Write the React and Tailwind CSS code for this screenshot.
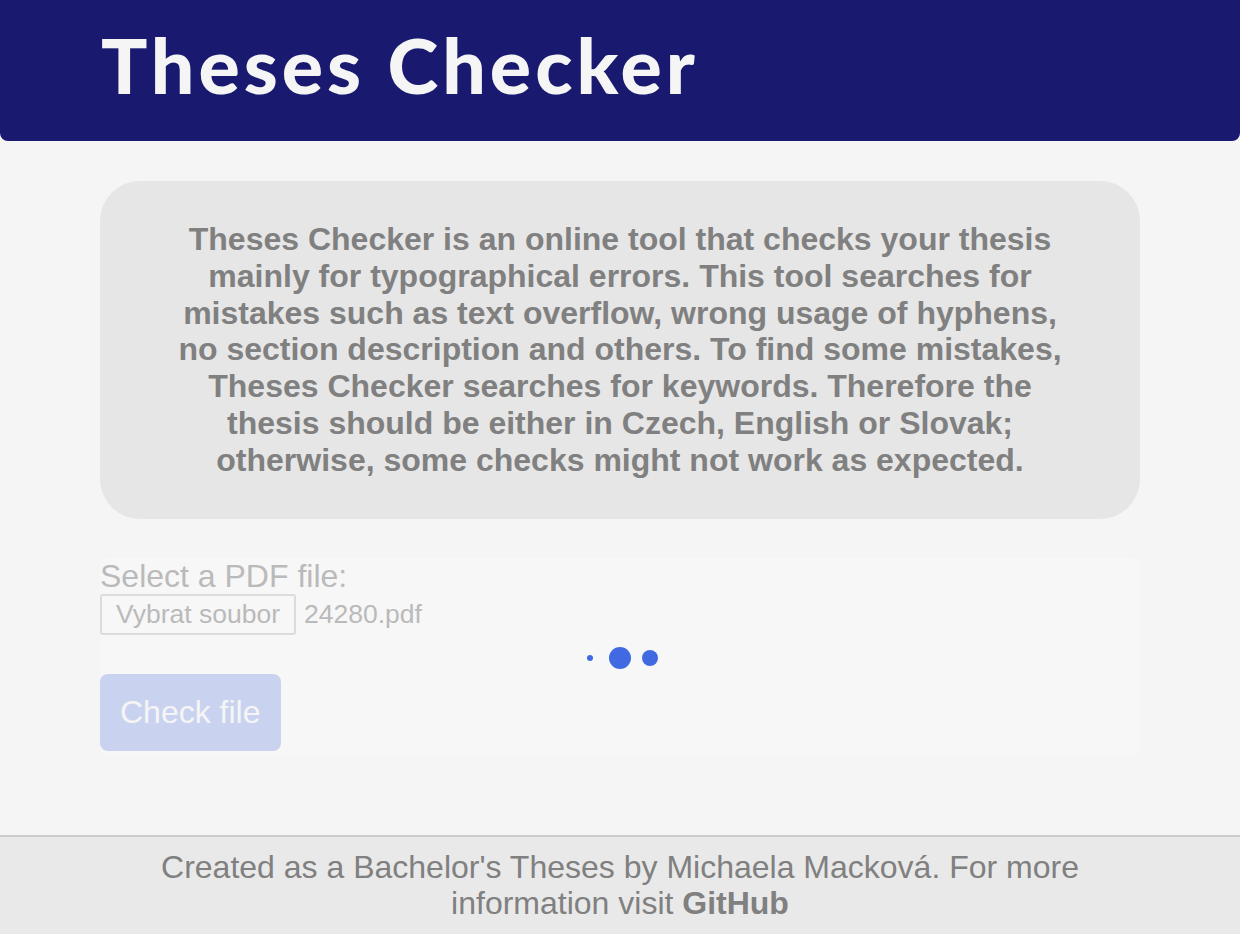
import React from 'react';

const DESCRIPTION =
    'Theses Checker is an online tool that checks your thesis mainly for typographical errors. This tool searches for mistakes such as text overflow, wrong usage of hyphens, no section description and others. To find some mistakes, Theses Checker searches for keywords. Therefore the thesis should be either in Czech, English or Slovak; otherwise, some checks might not work as expected.';

const LoadingDots = () => (
    <div className="flex items-center justify-center h-[36px]">
        <div className="w-[30px] flex justify-center">
            <div className="w-[6px] h-[6px] rounded-full bg-[#4169e1]" />
        </div>
        <div className="w-[30px] flex justify-center">
            <div className="w-[22px] h-[22px] rounded-full bg-[#4169e1]" />
        </div>
        <div className="w-[30px] flex justify-center">
            <div className="w-[16px] h-[16px] rounded-full bg-[#4169e1]" />
        </div>
    </div>
);

const App = () => {
    return (
        <div className="min-h-screen bg-[#f5f5f5] flex flex-col font-['Liberation_Sans',Arial,sans-serif]">
            <header className="h-[141px] bg-[#191970] rounded-b-lg flex items-center px-[101px]">
                <h1 className="text-[#f5f5f5] text-[77px] font-black font-['Lato',sans-serif] leading-none tracking-[4px] -mt-[12px]">
                    Theses Checker
                </h1>
            </header>

            <main className="flex-1 px-[100px] pt-[40px]">
                <div className="bg-[#e6e6e6] rounded-[40px] px-[70px] py-[40px]">
                    <p className="text-[#808080] text-[32px] font-bold leading-[36.8px] text-center">
                        {DESCRIPTION}
                    </p>
                </div>

                <div className="mt-[42px] bg-[#f7f7f7] rounded-md h-[198px]">
                    <div className="text-[#bababa] text-[32px] leading-[36.8px] -mt-[3px]">Select a PDF file:</div>
                    <div className="flex items-center gap-[8px]">
                        <div className="border-2 border-[#dcdcdc] rounded-[3px] h-[41px] px-[14px] flex items-center text-[#bababa] text-[26.5px]">
                            Vybrat soubor
                        </div>
                        <span className="text-[#bababa] text-[26.5px]">24280.pdf</span>
                    </div>
                    <div className="mt-[5px]">
                        <LoadingDots />
                    </div>
                    <button className="-mt-[2px] bg-[#c9d3f0] text-[#f5f5f5] text-[32px] leading-[36.8px] rounded-lg px-[20px] py-[20px]">
                        Check file
                    </button>
                </div>
            </main>

            <footer className="mt-[79px] border-t-2 border-[#cccccc] bg-[#e9e9e9] text-[#808080] text-[32px] leading-[36.8px] text-center px-[150px] pt-[12px] pb-[13px]">
                Created as a Bachelor's Theses by Michaela Macková. For more information visit <strong className="font-bold">GitHub</strong>
            </footer>
        </div>
    );
};

export default App;
